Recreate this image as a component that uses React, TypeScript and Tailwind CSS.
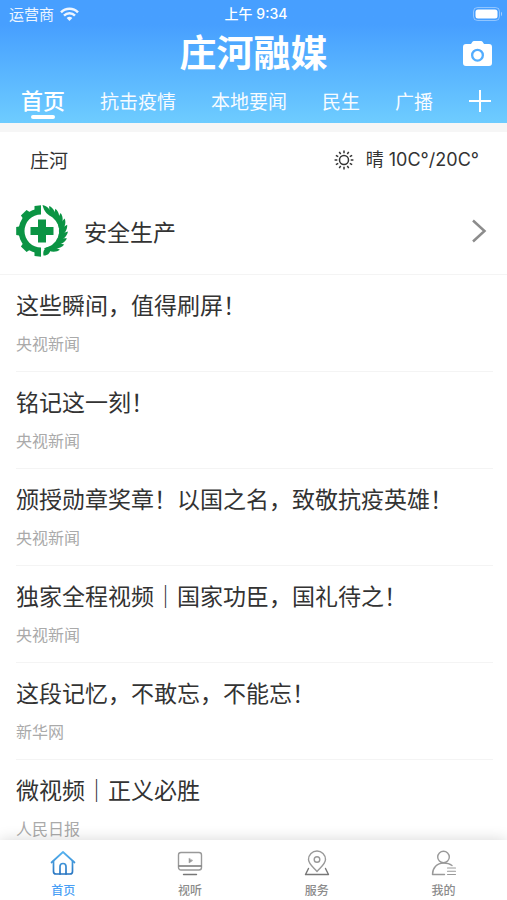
import React from 'react'

const channels = ['抗击疫情', '本地要闻', '民生', '广播']

const news: [string, string][] = [
    ['这些瞬间，值得刷屏！', '央视新闻'],
    ['铭记这一刻！', '央视新闻'],
    ['颁授勋章奖章！以国之名，致敬抗疫英雄！', '央视新闻'],
    ['独家全程视频｜国家功臣，国礼待之！', '央视新闻'],
    ['这段记忆，不敢忘，不能忘！', '新华网'],
    ['微视频｜正义必胜', '人民日报'],
]

const WifiIcon: React.FC = () => (
    <svg className="h-[15px] w-[19px]" viewBox="0 0 19 15" fill="none" stroke="currentColor" strokeWidth="2.5">
        <path d="M1 5.4a12 12 0 0 1 17 0" />
        <path d="M4 8.6a7.8 7.8 0 0 1 11 0" />
        <path d="M9.5 14 6.6 11.1a4.1 4.1 0 0 1 5.8 0z" fill="currentColor" stroke="none" />
    </svg>
)

const BatteryIcon: React.FC = () => (
    <svg className="h-[14px] w-[30px]" viewBox="0 0 30 14">
        <rect x="0.5" y="0.5" width="26" height="13" rx="4" fill="none" stroke="#fff" strokeOpacity="0.4" />
        <rect x="2.5" y="2.5" width="22" height="9" rx="2.5" fill="#fff" />
        <path d="M28 4.8c1.4.6 1.4 3.8 0 4.4z" fill="#fff" fillOpacity="0.5" />
    </svg>
)

const CameraIcon: React.FC = () => (
    <svg className="h-[25px] w-[29px]" viewBox="0 0 29 25">
        <path
            fill="#fff"
            fillRule="evenodd"
            d="M3 3h5l1.3-2Q9.9 0 11 0h7q1.1 0 1.7 1L21 3h5q3 0 3 3v16q0 3-3 3H3q-3 0-3-3V6q0-3 3-3zM14.5 7.7a6.5 6.5 0 1 0 0 13 6.5 6.5 0 0 0 0-13zm0 2.3a4.2 4.2 0 1 1 0 8.4 4.2 4.2 0 0 1 0-8.4z"
        />
    </svg>
)

const SunIcon: React.FC = () => (
    <svg className="h-5 w-5" viewBox="0 0 20 20" fill="none" stroke="#333" strokeWidth="1.5">
        <circle cx="10" cy="10" r="4.5" />
        {[0, 30, 60, 90, 120, 150, 180, 210, 240, 270, 300, 330].map((angle) => (
            <path key={angle} d="M10 .6v2.7" transform={`rotate(${angle} 10 10)`} />
        ))}
    </svg>
)

// half gear on the left, wheat leaves on the right, cross in the middle
const SafetyLogo: React.FC = () => (
    <svg className="h-[52px] w-[52px]" viewBox="0 0 52 52" fill="#0b9444">
        <path d="M25 3.5A22.5 22.5 0 0 0 25 48.5V42.5A16.5 16.5 0 0 1 25 9.5z" />
        {[-45, -90, -135].map((angle) => (
            <path key={angle} d="M21 6 22 .2h8L31 6z" transform={`rotate(${angle} 26 26)`} />
        ))}
        <path d="M18.5 6V1L25 .2V9z" />
        <path d="M18.5 46v5l6.5.8V43z" />
        <path d="M22 14.5h8V22h7.5v8H30v7.5h-8V30h-7.5v-8H22z" />
        {[10, 25, 40, 55, 70, 85, 100, 115, 130, 145].map((angle) => (
            <path key={angle} d="M22 .4c4.600-.2 9.800 3.400 12.400 10.400C29 9.800 24.600 6.600 22 .4z" transform={`rotate(${angle} 26 26)`} />
        ))}
        <path d="M27.5 50.5c-1.2-5 2-8.600 6.500-9 1.500 5-1.200 9.300-6.500 9z" />
    </svg>
)

const HomeIcon: React.FC = () => (
    <svg className="h-[26px] w-[26px]" viewBox="0 0 26 26" fill="none" stroke="url(#homeBlue)" strokeWidth="1.7" strokeLinecap="round" strokeLinejoin="round">
        <defs>
            <linearGradient id="homeBlue" x1="0" y1="0" x2="0" y2="26" gradientUnits="userSpaceOnUse">
                <stop stopColor="#5ab8f4" />
                <stop offset="1" stopColor="#2470bd" />
            </linearGradient>
        </defs>
        <path d="M1.5 12.5 13 2l11.5 10.5" />
        <path d="M3.5 11v10.500q0 2.500 2.500 2.500h14q2.500 0 2.500-2.500V11" />
        <path d="M10 24v-7.500a3 3 0 0 1 6 0V24" />
    </svg>
)

const WatchIcon: React.FC = () => (
    <svg className="h-[26px] w-[26px]" viewBox="0 0 26 26" fill="none" stroke="#999" strokeWidth="1.4" strokeLinecap="round" strokeLinejoin="round">
        <rect x="1.5" y="2.5" width="23" height="17.5" rx="2.5" />
        <path d="M2 16h22" stroke="#777" />
        <path d="M12 8.5V13l3.500-2.300z" fill="#999" strokeWidth="0.5" />
        <path d="M6.5 24.500h13" stroke="#777" />
    </svg>
)

const ServiceIcon: React.FC = () => (
    <svg className="h-[26px] w-[26px]" viewBox="0 0 26 26" fill="none" stroke="#999" strokeWidth="1.4" strokeLinecap="round" strokeLinejoin="round">
        <path d="M13 21.5C8 16 4.5 13.5 4.5 9.500a8.500 8.500 0 0 1 17 0c0 4-3.500 6.500-8.500 12z" />
        <circle cx="13" cy="9.5" r="2.8" />
        <path d="M4.5 18.5 1.5 24.500h23L21.500 18.500" stroke="#777" />
    </svg>
)

const MineIcon: React.FC = () => (
    <svg className="h-[26px] w-[26px]" viewBox="0 0 26 26" fill="none" stroke="#999" strokeWidth="1.4" strokeLinecap="round" strokeLinejoin="round">
        <circle cx="12.5" cy="7" r="5.8" />
        <path d="M21 15.5C18.500 13.500 15.500 13 12.500 13 6 13 1.500 18 1.500 24.500h12" />
        <path d="M16.5 18h8M16.5 21.200h8M16.5 24.500h8" strokeWidth="1.1" />
    </svg>
)

const tabs: [string, React.FC][] = [
    ['首页', HomeIcon],
    ['视听', WatchIcon],
    ['服务', ServiceIcon],
    ['我的', MineIcon],
]

const App: React.FC = () => {
    return (
        <div className="flex h-screen flex-col overflow-hidden bg-white font-['Noto_Sans_CJK_SC',sans-serif] text-[#333]">
            <header className="shrink-0 bg-linear-to-b from-[#479fff] from-20% to-[#6eccff] text-white">
                <div className="grid h-7 grid-cols-3 items-center pr-1 pl-[9px] text-[15px] leading-5">
                    <div className="flex items-center gap-1.5 opacity-90">
                        <span>运营商</span>
                        <WifiIcon />
                    </div>
                    <div className="text-center font-['Inter','Noto_Sans_CJK_SC',sans-serif] text-sm font-medium">上午 9:34</div>
                    <div className="flex justify-end">
                        <BatteryIcon />
                    </div>
                </div>
                <div className="grid h-[50px] grid-cols-[1fr_auto_1fr] items-center px-[15px]">
                    <h1 className="col-start-2 pb-1 text-[37px] leading-[46px] font-bold">庄河融媒</h1>
                    <button className="justify-self-end" aria-label="拍摄">
                        <CameraIcon />
                    </button>
                </div>
                <nav className="flex h-[45px] items-center gap-[35px] pr-4 pl-[21px] text-[19px] leading-7 whitespace-nowrap">
                    <button className="relative pb-1 text-[22px] font-medium">
                        首页
                        <span className="absolute -bottom-0.5 left-1/2 h-1 w-6 -translate-x-1/2 rounded-full bg-white" />
                    </button>
                    {channels.map((channel) => (
                        <button key={channel} className="opacity-95">{channel}</button>
                    ))}
                    <button className="ml-auto" aria-label="更多频道">
                        <svg className="h-6 w-6" viewBox="0 0 24 24" stroke="#fff" strokeWidth="2">
                            <path d="M1 12h22M12 1v22" />
                        </svg>
                    </button>
                </nav>
            </header>

            <main className="flex-1 overflow-hidden">
                <div className="h-[9px] bg-[#f6f6f6]" />
                <div className="flex h-14 items-center justify-between pr-7 pl-[30px] text-[19px]">
                    <span>庄河</span>
                    <div className="flex items-center gap-3">
                        <SunIcon />
                        <span className="font-['Inter','Noto_Sans_CJK_SC',sans-serif] text-lg">晴 10C°/20C°</span>
                    </div>
                </div>
                <a href="#" className="flex h-[87px] items-center gap-4 border-b border-[#f4f4f4] pr-5 pl-4">
                    <SafetyLogo />
                    <span className="flex-1 text-[23px]">安全生产</span>
                    <svg className="h-6 w-4" viewBox="0 0 16 24" fill="none" stroke="#8c8c8c" strokeWidth="2.5">
                        <path d="M2 1.5 13.5 12 2 22.5" />
                    </svg>
                </a>
                <ul className="pr-3.5 pl-4">
                    {news.map(([title, source]) => (
                        <li key={title} className="border-b border-[#f4f4f4] pt-[13px] pb-4">
                            <a href="#" className="flex flex-col gap-[11px]">
                                <h2 className="text-[23px] leading-8">{title}</h2>
                                <span className="text-base leading-6 text-[#aaa]">{source}</span>
                            </a>
                        </li>
                    ))}
                </ul>
            </main>

            <nav className="relative z-10 grid h-[60px] shrink-0 grid-cols-4 bg-white shadow-[0_0_14px_rgba(0,0,0,0.16)]">
                {tabs.map(([label, Icon], i) => (
                    <button
                        key={label}
                        className={`flex flex-col items-center gap-1 pt-[10px] text-xs leading-5 font-medium ${i === 0 ? 'text-[#4a9ff5]' : 'text-[#8c8c8c]'}`}
                    >
                        <Icon />
                        {label}
                    </button>
                ))}
            </nav>
        </div>
    )
}

export default App
